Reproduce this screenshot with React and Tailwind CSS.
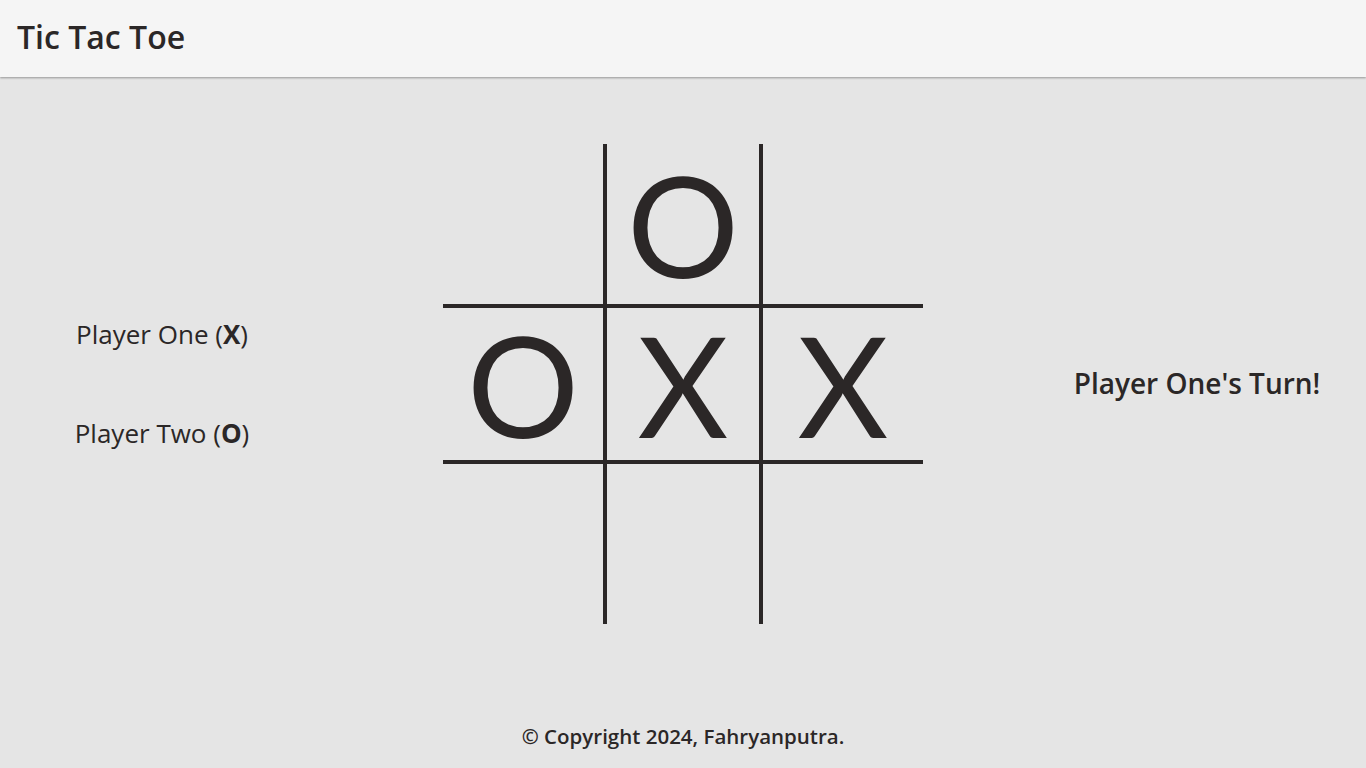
import React from "react";

const board = ["", "O", "", "O", "X", "X", "", "", ""];

// middle row and middle column carry the grid lines
const cellBorder = [
  "",
  "border-x-4",
  "",
  "border-y-4",
  "border-4",
  "border-y-4",
  "",
  "border-x-4",
  "",
];

const Cell = ({ value, index }) => (
  <div
    className={`w-[160px] h-[160px] border-[#2b2727] ${cellBorder[index]} flex items-center justify-center text-[140px] leading-none text-[#2b2727] font-['Lato',sans-serif] font-normal`}
  >
    {value}
  </div>
);

export default function App() {
  return (
    <div className="min-h-screen flex flex-col bg-[#e5e5e5] text-[#2b2727] font-['Open_Sans',sans-serif]">
      <header className="h-[77px] bg-[#f5f5f5] flex items-center px-[17px] pb-[4px] shadow-[0_1px_2px_rgba(0,0,0,0.35)]">
        <h1 className="text-[32px] font-semibold">Tic Tac Toe</h1>
      </header>

      <main className="grid grid-cols-[1fr_480px_1fr] items-center pt-[67px]">
        <div className="flex flex-col items-center gap-[60px] pr-[119px] text-[26px]">
          <p>
            Player One (<span className="font-bold">X</span>)
          </p>
          <p>
            Player Two (<span className="font-bold">O</span>)
          </p>
        </div>

        <div className="grid grid-cols-3 w-[480px] h-[480px]">
          {board.map((v, i) => (
            <Cell key={i} value={v} index={i} />
          ))}
        </div>

        <div className="flex justify-center pl-[105px] pb-[3px]">
          <p className="text-[28px] font-semibold">Player One's Turn!</p>
        </div>
      </main>

      <footer className="flex-1 flex items-end justify-center pb-[16px]">
        <p className="text-[20.5px] font-semibold">© Copyright 2024, Fahryanputra.</p>
      </footer>
    </div>
  );
}
